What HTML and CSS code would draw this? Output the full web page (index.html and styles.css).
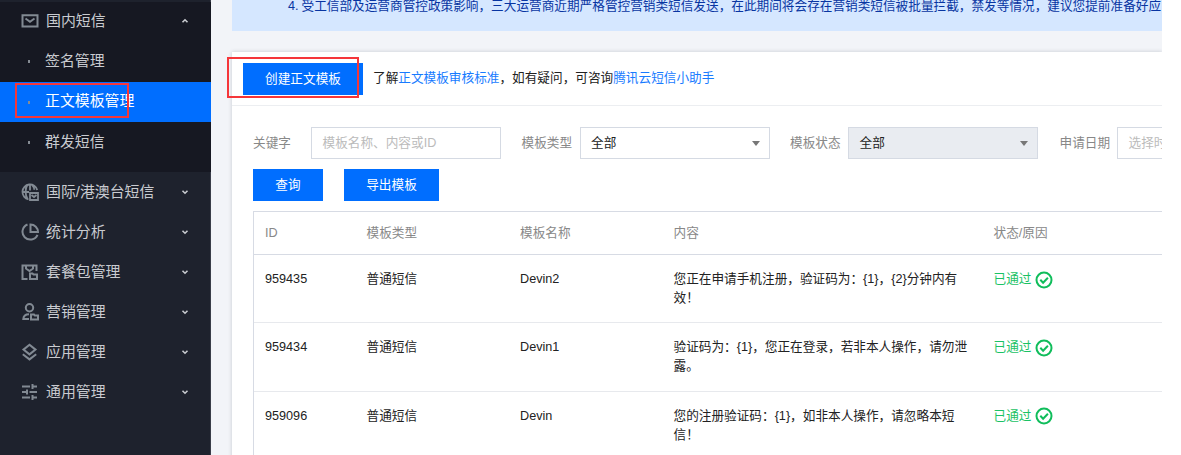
FILE: index.html
```html
<!DOCTYPE html>
<html lang="zh-CN">
<head>
<meta charset="utf-8">
<title>正文模板管理</title>
<link rel="stylesheet" href="styles.css">
</head>
<body>
<div class="app">
  <nav class="sidebar">
    <div class="group-open">
      <div class="item">
        <svg class="icon" viewBox="0 0 18 18"><path d="M1.500 3.200h15v11.300h-15zM4.500 6.500L9 9.700l4.500-3.200"/></svg>
        <span>国内短信</span>
        <svg class="arrow" viewBox="0 0 8 6"><path d="M1.500 4.300L4 1.800l2.500 2.500"/></svg>
      </div>
      <div class="item sub"><i class="dot"></i><span>签名管理</span></div>
      <div class="item sub active"><i class="dot"></i><span>正文模板管理</span><b class="mark mark-menu"></b></div>
      <div class="item sub"><i class="dot"></i><span>群发短信</span></div>
    </div>
    <div class="item">
      <svg class="icon" viewBox="0 0 18 18"><path d="M16.200 7A7.500 7.500 0 1 0 7.500 16.300M1 9H8M9 1v6.500M6.500 1.800C4 5.500 4 12 6.500 16M11 1.800c1.500 1.500 2.200 3 2.300 5M9 10h8v7H9zM10.500 12l2.500 2 2.500-2" stroke-width="1.800"/></svg>
      <span>国际/港澳台短信</span>
      <svg class="arrow" viewBox="0 0 8 6"><path d="M1.500 1.700L4 4.200l2.500-2.500"/></svg>
    </div>
    <div class="item">
      <svg class="icon" viewBox="0 0 18 18"><path d="M6.500 1.500A7.800 7.800 0 1 0 16.500 11.800M9.500 1.500V9H17A7.500 7.500 0 0 0 9.500 1.500z"/></svg>
      <span>统计分析</span>
      <svg class="arrow" viewBox="0 0 8 6"><path d="M1.500 1.700L4 4.200l2.500-2.500"/></svg>
    </div>
    <div class="item">
      <svg class="icon" viewBox="0 0 18 18"><path d="M6.500 16H1.500V2.500h14V8M5 3v2.500l3.500 2.500L12 5.500V3M9 10.500h2.500l1 1H16V16H9z"/></svg>
      <span>套餐包管理</span>
      <svg class="arrow" viewBox="0 0 8 6"><path d="M1.500 1.700L4 4.200l2.500-2.500"/></svg>
    </div>
    <div class="item">
      <svg class="icon" viewBox="0 0 18 18"><circle cx="8.500" cy="4.800" r="3.700"/><path d="M8 11.200c-3 0-5.500 1.500-5.700 4.800H8M10 11.500h3l.8 1H17v4h-7z"/></svg>
      <span>营销管理</span>
      <svg class="arrow" viewBox="0 0 8 6"><path d="M1.500 1.700L4 4.200l2.500-2.500"/></svg>
    </div>
    <div class="item">
      <svg class="icon" viewBox="0 0 18 18"><path d="M8.500 1.800l6 4.800-6 4.800-6-4.800zM1.800 11.200l6.700 5.200 6.700-5.200"/></svg>
      <span>应用管理</span>
      <svg class="arrow" viewBox="0 0 8 6"><path d="M1.500 1.700L4 4.200l2.500-2.500"/></svg>
    </div>
    <div class="item">
      <svg class="icon" viewBox="0 0 18 18"><path d="M1 3.500h8M11.500 1v5M11.500 3.500H16M1 9h5M6 6.500v5M8.500 9H16M1 14.500h8M11.500 12v5M11.500 14.500H16"/></svg>
      <span>通用管理</span>
      <svg class="arrow" viewBox="0 0 8 6"><path d="M1.500 1.700L4 4.200l2.500-2.500"/></svg>
    </div>
  </nav>

  <main class="main">
    <div class="notice"><span class="num">4.</span>受工信部及运营商管控政策影响，三大运营商近期严格管控营销类短信发送，在此期间将会存在营销类短信被批量拦截，禁发等情况，建议您提前准备好应</div>
    <section class="card">
      <header class="card-head">
        <button class="btn create">创建正文模板</button>
        <p class="tip">了解<a>正文模板审核标准</a>，如有疑问，可咨询<a>腾讯云短信小助手</a></p>
        <b class="mark mark-create"></b>
      </header>
      <div class="filters">
        <label class="w-key">关键字</label><div class="field ghost">模板名称、内容或ID</div>
        <label>模板类型</label><div class="field">全部<i class="caret"></i></div>
        <label>模板状态</label><div class="field disabled">全部<i class="caret"></i></div>
        <label class="w-date">申请日期</label><div class="field ghost">选择时</div>
      </div>
      <div class="actions">
        <button class="btn query">查询</button>
        <button class="btn export">导出模板</button>
      </div>
      <div class="table">
        <div class="row head"><span>ID</span><span>模板类型</span><span>模板名称</span><span>内容</span><span>状态/原因</span></div>
        <div class="row"><span>959435</span><span>普通短信</span><span>Devin2</span><span>您正在申请手机注册，验证码为：{1}，{2}分钟内有<br>效！</span><span class="ok">已通过<svg class="check" viewBox="0 0 18 18"><circle cx="9" cy="9" r="7.500"/><path d="M5.300 8.800l2.800 2.900 4.800-4.900"/></svg></span></div>
        <div class="row"><span>959434</span><span>普通短信</span><span>Devin1</span><span>验证码为：{1}，您正在登录，若非本人操作，请勿泄<br>露。</span><span class="ok">已通过<svg class="check" viewBox="0 0 18 18"><circle cx="9" cy="9" r="7.500"/><path d="M5.300 8.800l2.800 2.900 4.800-4.900"/></svg></span></div>
        <div class="row"><span>959096</span><span>普通短信</span><span>Devin</span><span>您的注册验证码：{1}，如非本人操作，请忽略本短<br>信！</span><span class="ok">已通过<svg class="check" viewBox="0 0 18 18"><circle cx="9" cy="9" r="7.500"/><path d="M5.300 8.800l2.800 2.900 4.800-4.900"/></svg></span></div>
      </div>
    </section>
  </main>
</div>
</body>
</html>
```
FILE: styles.css
```css
* { box-sizing: border-box; }
body {
  margin: 0;
  height: 455px;
  overflow: hidden;
  background: #fff;
  color: #222;
  font: 12.65px/19px "Liberation Sans", "Noto Sans CJK SC", sans-serif;
}
.app { display: flex; width: 1162px; height: 455px; overflow: hidden; }

.sidebar {
  flex: none;
  width: 211px;
  padding-top: 2px;
  background: #1e222d;
  color: #c9cbd0;
  font-size: 14.900px;
  border-right: 1px solid #393d49;
}
.group-open { height: 170px; margin-right: -1px; padding-right: 1px; background: #161822; }
.item { display: flex; align-items: center; height: 40.100px; padding: 0 21px; position: relative; }
.group-open .item:first-child { height: 38px; }
.group-open .item:nth-child(2) { height: 42px; }
.icon { width: 18px; height: 18px; margin-right: 7px; fill: none; stroke: #828a93; stroke-width: 2; }
.arrow { width: 8px; height: 6px; margin-left: auto; fill: none; stroke: #c9cbd0; stroke-width: 1.600; }
.item span { padding-top: 1px; white-space: nowrap; }
.sub { padding-left: 28px; }
.sub.active { background: #006eff; color: #fff; margin-right: -1px; }
.item.active span { padding: 0 0 1px; }
.dot { width: 2px; height: 3px; margin-right: 15px; background: #858b93; }
.group-open + .item { height: 40px; }

.mark { position: absolute; border: 2px solid #f5363a; pointer-events: none; }
.mark-menu { left: 15px; top: 1px; width: 114px; height: 35px; }
.mark-create { left: -5px; top: 5px; width: 132px; height: 41px; }

.main { flex: none; width: 951px; padding-left: 21px; background: #f2f4f8; }
.notice {
  height: 31px;
  padding-left: 56px;
  background: #d5e7ff;
  color: #0835a2;
  line-height: 13px;
  white-space: nowrap;
}
.num { display: inline-block; width: 13.500px; }
.card { height: 420px; margin-top: 21px; background: #fff; box-shadow: 0 0 4px rgba(40, 50, 70, .22); }
.card-head {
  position: relative;
  display: flex;
  align-items: center;
  height: 54px;
  padding-left: 11px;
  border-bottom: 1px solid #eceef1;
}
.btn { border: 0; padding: 0; height: 32px; background: #006eff; color: #fff; font: inherit; }
.create { width: 120px; padding-top: 1px; }
.tip { margin: 0 0 0 10px; white-space: nowrap; }
a { color: #187bff; }

.filters { display: flex; align-items: center; margin: 21px 0 0 21px; white-space: nowrap; }
.filters label { flex: none; width: 78.500px; padding-left: 20.500px; color: #888; }
.filters .w-key { width: 58px; padding-left: 0; }
.filters .w-date { width: 79px; padding-left: 21.500px; }
.field {
  flex: none;
  display: flex;
  align-items: center;
  justify-content: space-between;
  width: 190px;
  height: 32px;
  padding: 0 9px 0 10.500px;
  border: 1px solid #d5dae3;
}
.ghost { color: #bbb; }
.disabled { background: #e9ecf1; }
.caret { border: 4.500px solid transparent; border-top: 5px solid #777; border-bottom: 0; }
.actions { display: flex; gap: 21px; margin: 10px 0 0 21px; }
.query { width: 70px; }
.export { width: 95px; }

.table { margin: 10px 0 0 21px; border: 1px solid #d7dbe4; border-right: 0; border-bottom: 0; }
.row {
  display: grid;
  grid-template-columns: 101.500px 153.500px 153.500px 320px 1fr;
  height: 68.400px;
  padding: 15px 0 0 11px;
  border-bottom: 1px solid #e7e9ed;
  white-space: nowrap;
}
.head { height: 43px; padding-top: 12px; color: #888; border-color: #d7dbe4; }
.ok { display: flex; align-items: center; height: 19px; color: #1bc265; }
.check { width: 18px; height: 18px; margin-left: 4px; fill: none; stroke: #10bd5b; stroke-width: 2; }
```
